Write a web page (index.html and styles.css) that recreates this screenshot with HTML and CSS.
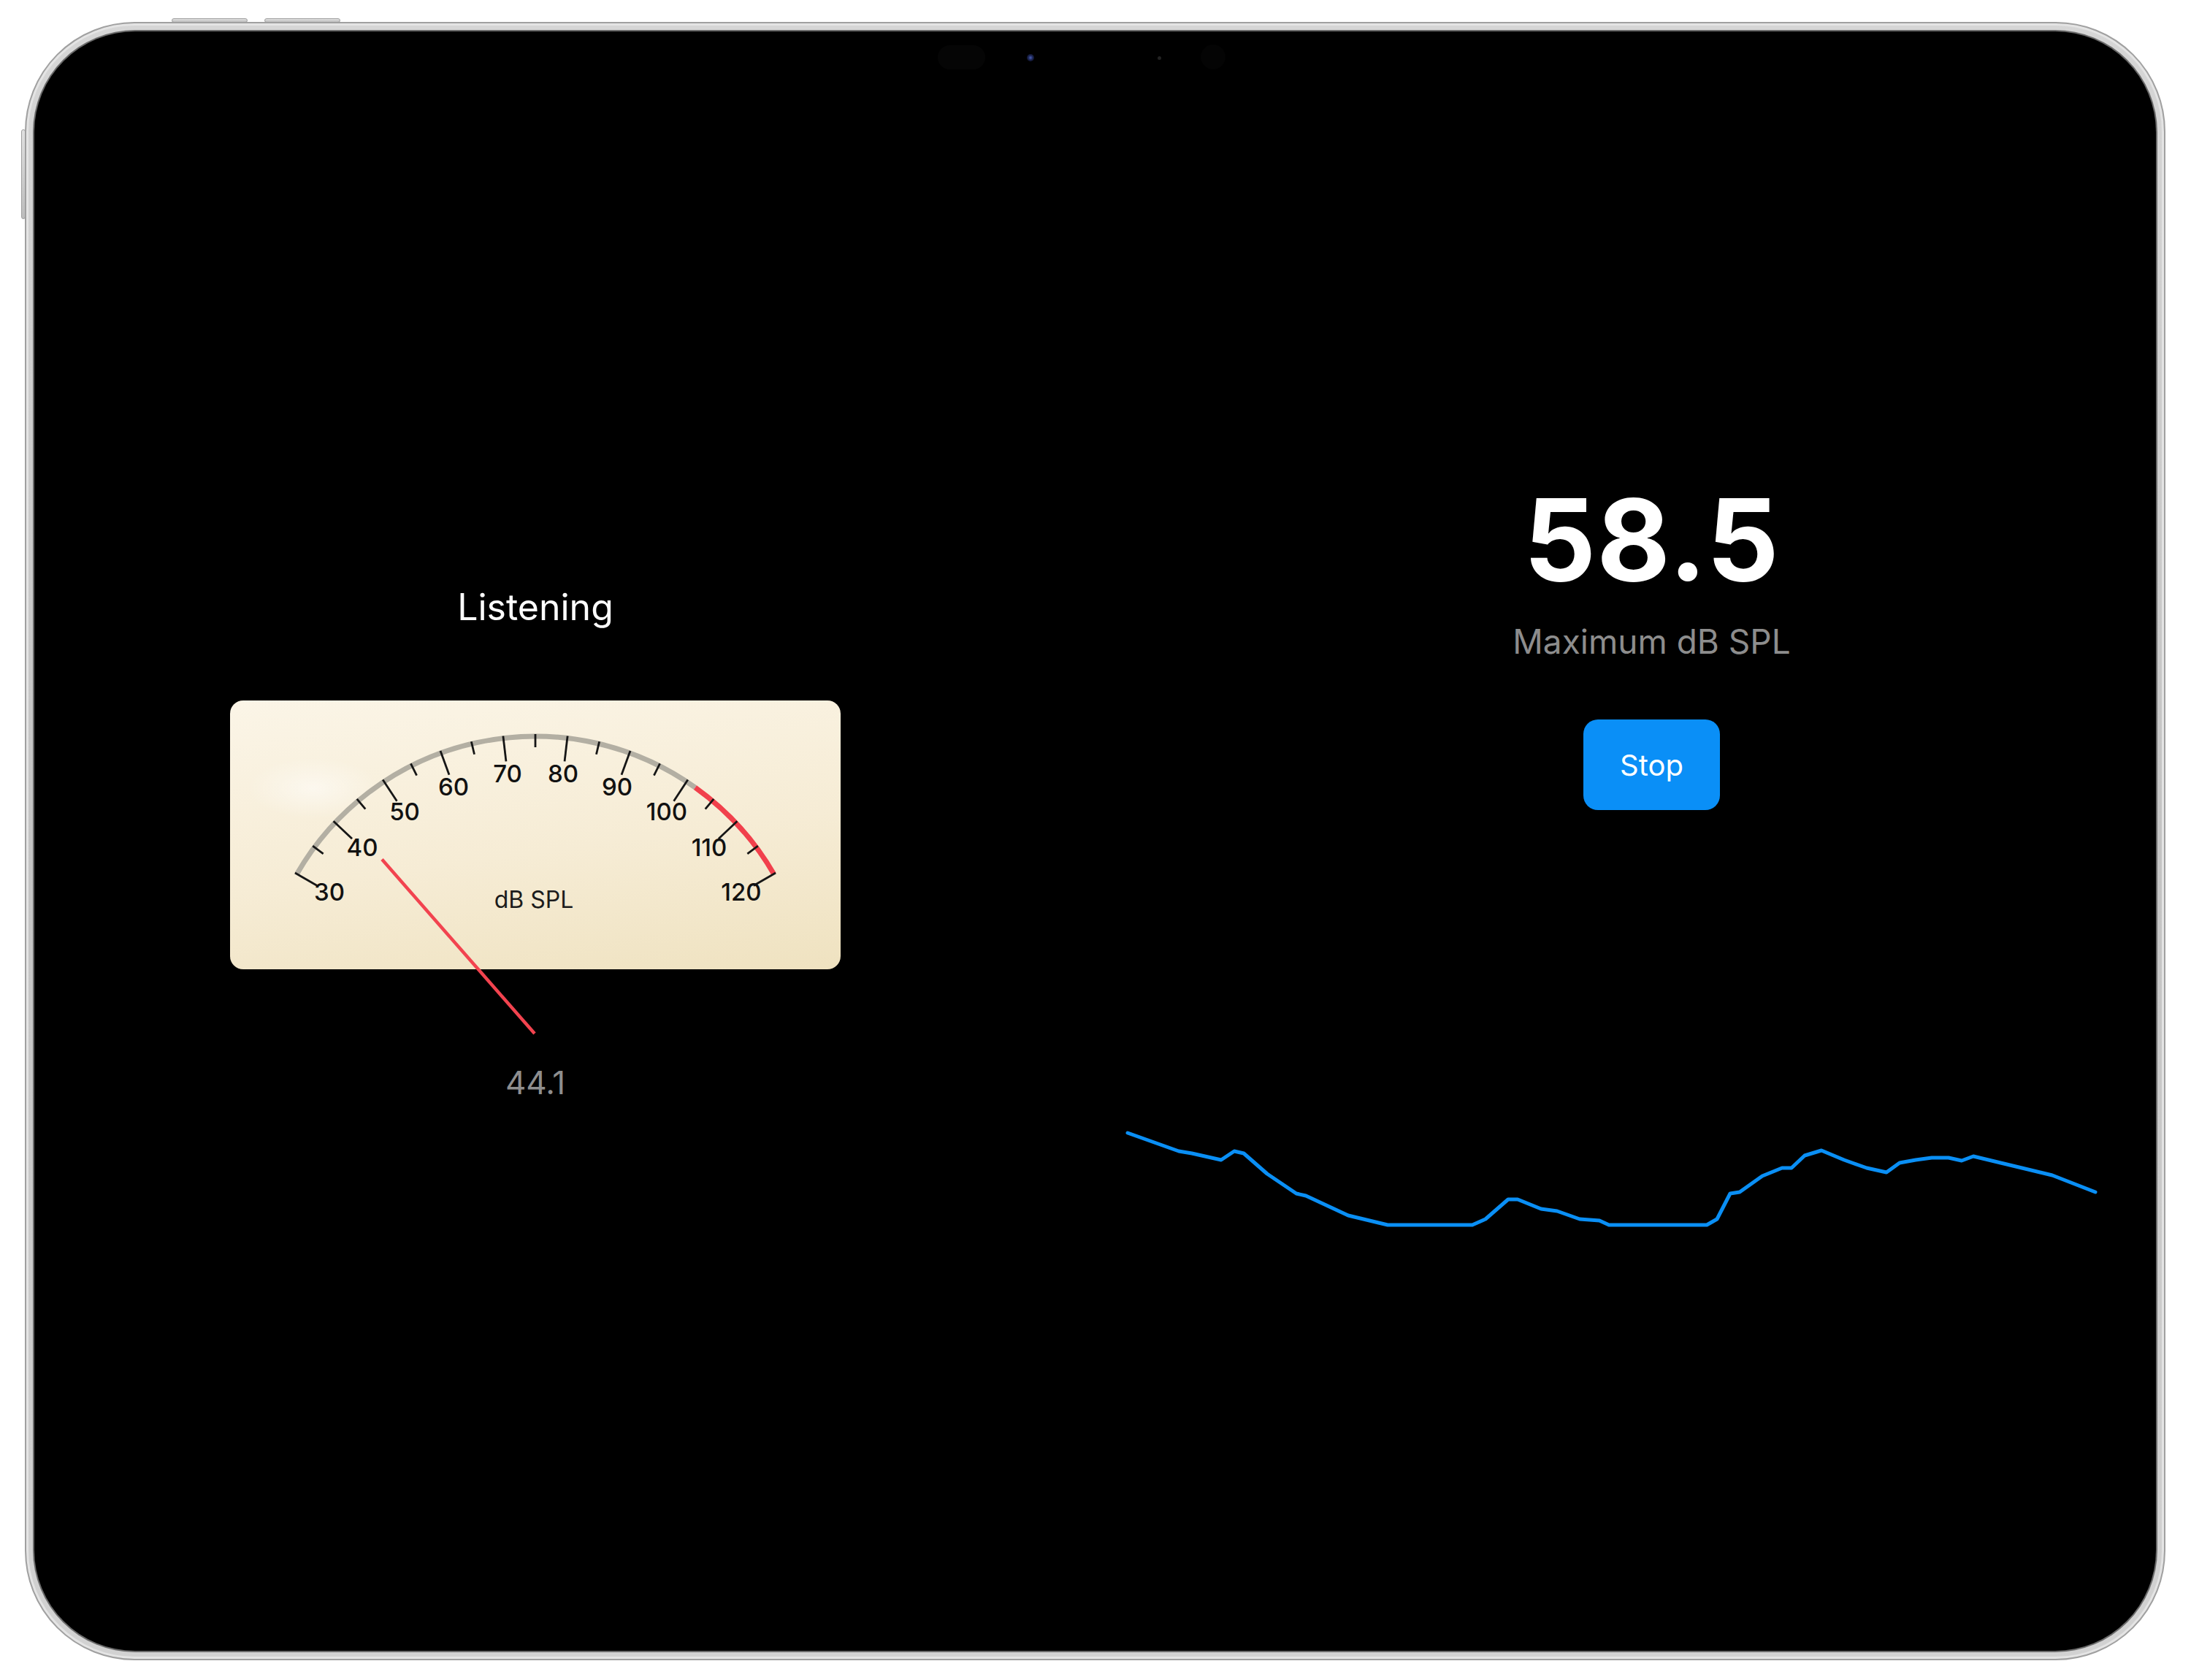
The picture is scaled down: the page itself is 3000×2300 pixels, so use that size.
FILE: index.html
```html
<!DOCTYPE html>
<html>
<head>
<meta charset="utf-8">
<link rel="stylesheet" href="styles.css">
</head>
<body>
<div class="device">
  <div class="hw-btn hw-top1"></div>
  <div class="hw-btn hw-top2"></div>
  <div class="hw-btn hw-side"></div>
  <div class="screen">
    <div class="cam cam-pill"></div>
    <div class="cam cam-lens"></div>
    <div class="cam cam-dot"></div>
    <div class="cam cam-ring"></div>

    <section class="left-col">
      <div class="status">Listening</div>
      <div class="meter">
        <svg class="meter-svg" width="836" height="368" viewBox="0 0 836 368">
          <path class="arc" d="M 91.5 237.5 A 377 377 0 0 1 636.9 119.1"/>
          <path class="arc-red" d="M 636.9 119.1 A 377 377 0 0 1 744.5 237.5"/>
          <g class="ticks">
            <line class="major" x1="418" y1="46" x2="418" y2="81" transform="rotate(-60 418 426)"/>
            <line class="minor" x1="418" y1="46" x2="418" y2="64" transform="rotate(-53.333 418 426)"/>
            <line class="major" x1="418" y1="46" x2="418" y2="81" transform="rotate(-46.667 418 426)"/>
            <line class="minor" x1="418" y1="46" x2="418" y2="64" transform="rotate(-40 418 426)"/>
            <line class="major" x1="418" y1="46" x2="418" y2="81" transform="rotate(-33.333 418 426)"/>
            <line class="minor" x1="418" y1="46" x2="418" y2="64" transform="rotate(-26.667 418 426)"/>
            <line class="major" x1="418" y1="46" x2="418" y2="81" transform="rotate(-20 418 426)"/>
            <line class="minor" x1="418" y1="46" x2="418" y2="64" transform="rotate(-13.333 418 426)"/>
            <line class="major" x1="418" y1="46" x2="418" y2="81" transform="rotate(-6.667 418 426)"/>
            <line class="minor" x1="418" y1="46" x2="418" y2="64" transform="rotate(0 418 426)"/>
            <line class="major" x1="418" y1="46" x2="418" y2="81" transform="rotate(6.667 418 426)"/>
            <line class="minor" x1="418" y1="46" x2="418" y2="64" transform="rotate(13.333 418 426)"/>
            <line class="major" x1="418" y1="46" x2="418" y2="81" transform="rotate(20 418 426)"/>
            <line class="minor" x1="418" y1="46" x2="418" y2="64" transform="rotate(26.667 418 426)"/>
            <line class="major" x1="418" y1="46" x2="418" y2="81" transform="rotate(33.333 418 426)"/>
            <line class="minor" x1="418" y1="46" x2="418" y2="64" transform="rotate(40 418 426)"/>
            <line class="major" x1="418" y1="46" x2="418" y2="81" transform="rotate(46.667 418 426)"/>
            <line class="minor" x1="418" y1="46" x2="418" y2="64" transform="rotate(53.333 418 426)"/>
            <line class="major" x1="418" y1="46" x2="418" y2="81" transform="rotate(60 418 426)"/>
          </g>
          <g class="labels">
            <text x="136" y="262">30</text>
            <text x="181" y="201">40</text>
            <text x="239" y="152">50</text>
            <text x="306" y="118">60</text>
            <text x="380" y="100">70</text>
            <text x="456" y="100">80</text>
            <text x="530" y="118">90</text>
            <text x="598" y="152">100</text>
            <text x="656" y="201">110</text>
            <text x="700" y="262">120</text>
          </g>
          <text class="unit" x="416" y="272">dB SPL</text>
          <line class="needle" x1="417" y1="456" x2="208" y2="217.6"/>
        </svg>
      </div>
      <div class="current">44.1</div>
    </section>

    <section class="right-col">
      <div class="readout">
        <div class="max-value">58.5</div>
        <div class="max-label">Maximum dB SPL</div>
        <button class="stop-btn">Stop</button>
      </div>
      <svg class="chart" width="1327" height="145" viewBox="0 0 1327 145">
        <polyline class="chart-line" points="0,9 70,34 88,37 128,46 146,34 159,37 191,65 231,92 244,95 302,122 356,135 472,135 490,127 521,100 534,100 566,113 588,116 619,127 646,129 659,135 793,135 807,127 825,92 838,90 869,68 896,57 909,57 927,40 950,33 981,46 1012,57 1039,63 1057,50 1079,46 1101,43 1124,43 1142,47 1158,41 1266,67 1325,90"/>
      </svg>
    </section>
  </div>
</div>
</body>
</html>
```

FILE: styles.css
```css
* { box-sizing: border-box; }

html, body {
  margin: 0;
  padding: 0;
  background: #ffffff;
  width: 3000px;
  height: 2300px;
  overflow: hidden;
}

body {
  font-family: Inter, "Liberation Sans", sans-serif;
}

.device {
  position: relative;
  margin-left: 34px;
  margin-top: 30px;
  width: 2931px;
  height: 2243px;
  border-radius: 150px;
  padding: 11px;
  background: linear-gradient(180deg, #d6d6d6 0%, #c4c4c4 50%, #d2d2d2 100%);
  border: 2px solid #a0a0a0;
  box-shadow: inset 0 0 0 3px #e4e4e4;
}

.hw-btn {
  position: absolute;
  background: linear-gradient(180deg, #e0e0e0, #bdbdbd);
  border: 1px solid #a0a0a0;
  border-radius: 3px;
}
.hw-top1 { left: 199px; top: -7px; width: 104px; height: 6px; }
.hw-top2 { left: 326px; top: -7px; width: 104px; height: 6px; }
.hw-side { left: -7px; top: 145px; width: 6px; height: 123px; }

.screen {
  position: relative;
  width: 100%;
  height: 100%;
  background: #000;
  border-radius: 138px;
  display: flex;
  box-shadow: 0 0 0 2px #6a6a6a;
}

.cam { position: absolute; border-radius: 50%; }
.cam-pill { left: 1237px; top: 19px; width: 65px; height: 33px; border-radius: 16px; background: #050505; }
.cam-lens { left: 1359px; top: 31px; width: 10px; height: 10px; background: radial-gradient(circle, #4a5fb8 0%, #1b2450 45%, #05060c 100%); }
.cam-dot { left: 1538px; top: 34px; width: 5px; height: 5px; background: #222; }
.cam-ring { left: 1597px; top: 18px; width: 34px; height: 34px; background: #040404; }

.left-col {
  width: 1376px;
  display: flex;
  flex-direction: column;
  align-items: center;
  padding-top: 762px;
}

.status {
  color: #ffffff;
  font-size: 50px;
  line-height: 52px;
  height: 52px;
}

.meter {
  position: relative;
  margin-top: 102px;
  width: 836px;
  height: 368px;
  border-radius: 18px;
  background:
    radial-gradient(ellipse 90px 42px at 114px 120px, rgba(255,255,255,0.5), rgba(255,255,255,0) 100%),
    linear-gradient(172deg, #fbf5e7 0%, #f6ecd5 55%, #efe2c0 100%);
}

.meter-svg {
  position: absolute;
  left: 0;
  top: 0;
  overflow: visible;
}

.arc {
  fill: none;
  stroke: #b3afa3;
  stroke-width: 7;
}
.arc-red {
  fill: none;
  stroke: #f1404c;
  stroke-width: 7;
}
.ticks line {
  stroke: #161616;
  stroke-width: 2.8;
}
.labels text {
  font-family: Inter, "Liberation Sans", sans-serif;
  font-size: 33px;
  font-weight: 500;
  fill: #111111;
  text-anchor: middle;
  dominant-baseline: central;
}
.unit {
  font-family: Inter, "Liberation Sans", sans-serif;
  font-size: 32px;
  fill: #1c1c1c;
  text-anchor: middle;
  dominant-baseline: central;
}
.needle {
  stroke: #f2434f;
  stroke-width: 4.5;
  stroke-linecap: butt;
}

.current {
  margin-top: 133px;
  color: #8e8e8e;
  font-size: 44px;
  line-height: 44px;
}

.right-col {
  flex: 1;
  display: flex;
  flex-direction: column;
  padding-left: 125px;
  padding-right: 81px;
  padding-top: 618px;
}

.readout {
  display: flex;
  flex-direction: column;
  align-items: center;
  padding-left: 108px;
}

.max-value {
  color: #ffffff;
  font-size: 155px;
  line-height: 155px;
  font-weight: 700;
  letter-spacing: 1px;
}

.max-label {
  margin-top: 39px;
  color: #8d8d8d;
  font-size: 46px;
  line-height: 47px;
}

.stop-btn {
  margin-top: 83px;
  width: 187px;
  height: 124px;
  border: none;
  border-radius: 20px;
  background: #0a8ff7;
  color: #ffffff;
  font-family: Inter, "Liberation Sans", sans-serif;
  font-size: 40px;
  padding: 0;
}

.chart {
  display: block;
  margin-top: 433px;
  overflow: visible;
}

.chart-line {
  fill: none;
  stroke: #0a8ff5;
  stroke-width: 5;
  stroke-linejoin: round;
  stroke-linecap: round;
}
```
